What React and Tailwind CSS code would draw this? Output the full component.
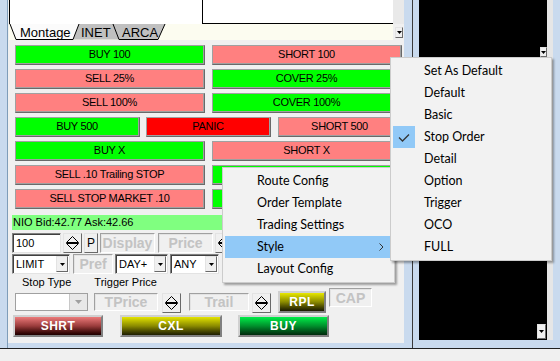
import React from 'react';

// raised classic button used in the hotkey grid
const Btn = ({ label, bg, className = '' }) => (
  <div className={`h-[20px] border border-[#a0a0a0] border-r-[#696969] border-b-[#696969] ${className}`}>
    <div className={`h-full flex items-center justify-center border-r border-b border-[#a0a0a0] ${bg}`}>
      {label && <span className="text-[11px] leading-none tracking-[-0.3px] text-black whitespace-nowrap">{label}</span>}
    </div>
  </div>
);

const Spin = ({ className = '' }) => (
  <div className={`w-[19px] h-[20px] bg-[#f0f0f0] border border-[#e3e3e3] border-r-[#696969] border-b-[#696969] flex items-center justify-center ${className}`}>
    <svg width="15" height="16" viewBox="0 0 15 16">
      <path d="M1.5 7.5 H13.5 L7.5 1.5 Z" fill="none" stroke="#000" />
      <path d="M1.5 8.5 H13.5 L7.5 14.5 Z" fill="none" stroke="#000" />
    </svg>
  </div>
);

const DropBtn = ({ className = '' }) => (
  <div className={`bg-[#f0f0f0] border border-[#e3e3e3] border-r-[#696969] border-b-[#696969] flex items-center justify-center ${className}`}>
    <svg width="5" height="3" viewBox="0 0 5 3">
      <path d="M0 0H5L2.5 3Z" fill="#000" />
    </svg>
  </div>
);

const Select = ({ label, className = '' }) => (
  <div className={`h-[20px] flex bg-white border border-[#808080] border-r-[#e3e3e3] border-b-[#e3e3e3] shadow-[inset_1px_1px_0_#404040] ${className}`}>
    <div className="flex-1 pl-[3px] flex items-center text-[11px] leading-none">{label}</div>
    <DropBtn className="w-[12px] h-[16px] mt-[1px] mr-[1px]" />
  </div>
);

const Off = ({ label, className = '' }) => (
  <div className={`h-[20px] flex items-center justify-center border border-[#a0a0a0] border-r-white border-b-white shadow-[inset_1px_1px_0_#e3e3e3] text-[14px] font-bold leading-none text-[#c3c3c3] ${className}`}>
    {label}
  </div>
);

const Grad = ({ label, bg, className = '' }) => (
  <div className={`border-2 border-[#d0d0d0] border-r-[#808080] border-b-[#808080] ${className}`}>
    <div className={`h-full flex items-center justify-center ${bg}`}>
      <span className="text-[12px] font-bold leading-none text-white tracking-[0.5px]">{label}</span>
    </div>
  </div>
);

const MenuItem = ({ label, active, arrow }) => (
  <div className={`h-[22px] flex items-center pl-[32px] pr-[8px] ${active ? 'bg-[#91c9f7]' : ''}`}>
    <span className="flex-1">{label}</span>
    {arrow && (
      <svg width="5" height="8" viewBox="0 0 5 8">
        <path d="M0.5 0.5 L4 4 L0.5 7.5" fill="none" stroke="#333" />
      </svg>
    )}
  </div>
);

const styles = ['Set As Default', 'Default', 'Basic', 'Stop Order', 'Detail', 'Option', 'Trigger', 'OCO', 'FULL'];

export default function App() {
  return (
    <div className="relative w-[560px] h-[361px] overflow-hidden bg-[#f0f0f0] font-['Liberation_Sans',Arial,sans-serif] text-black">
      <div className="flex h-[349px] border-b border-[#202020]">
        {/* order entry window */}
        <div className="flex w-[413px] border-r border-[#3a3a3a]">
          <div className="w-[8px] bg-[#c9daee] border-r border-[#7f9db9]" />
          <div className="flex-1 flex flex-col">
            <div className="flex-1 flex flex-col">
              <div className="flex h-[24px]">
                <div className="ml-[1px] w-[193px] bg-white border-l border-black" />
                <div className="w-[191px] bg-white border-l border-b border-black" />
                <div className="flex-1 bg-[#e9e9e9]" />
              </div>
              <div className="flex h-[16px]">
                <div className="ml-[1px] w-[384px] bg-[#fcfcf0]">
                  <svg width="384" height="16" className="block">
                    <polygon points="58,0 118,0 112,15.5 64,15.5" fill="#c0c0c0" />
                    <polygon points="104,0 156,0 149,15.5 110,15.5" fill="#c0c0c0" />
                    <polyline points="104,0 110,15.5 149,15.5 156,0" fill="none" stroke="#000" />
                    <polygon points="1,0 70,0 64,15.5 7,15.5" fill="#fbfbfb" />
                    <polyline points="1,0 7,15.5 64,15.5 70,0" fill="none" stroke="#000" />
                    <g fontFamily="Liberation Sans, Arial, sans-serif" fontSize="13" fill="#000">
                      <text x="11" y="13">Montage</text>
                      <text x="72" y="13">INET</text>
                      <text x="113" y="13">ARCA</text>
                    </g>
                  </svg>
                </div>
                <div className="flex-1 pt-[3px] pl-[2px]">
                  <DropBtn className="w-[8px] h-[11px]" />
                </div>
              </div>

              {/* hotkey buttons */}
              <div className="mt-[5px] ml-[7px] w-[387px] flex flex-col gap-[4px]">
                <div className="flex gap-[7px]">
                  <Btn label="BUY 100" bg="bg-[#00ff00]" className="w-[190px]" />
                  <Btn label="SHORT 100" bg="bg-[#ff8080]" className="w-[190px]" />
                </div>
                <div className="flex gap-[7px]">
                  <Btn label="SELL 25%" bg="bg-[#ff8080]" className="w-[190px]" />
                  <Btn label="COVER 25%" bg="bg-[#00ff00]" className="w-[190px]" />
                </div>
                <div className="flex gap-[7px]">
                  <Btn label="SELL 100%" bg="bg-[#ff8080]" className="w-[190px]" />
                  <Btn label="COVER 100%" bg="bg-[#00ff00]" className="w-[190px]" />
                </div>
                <div className="flex">
                  <Btn label="BUY 500" bg="bg-[#00ff00]" className="w-[125px]" />
                  <Btn label="PANIC" bg="bg-[#ff0000]" className="w-[125px] ml-[6px]" />
                  <Btn label="SHORT 500" bg="bg-[#ff8080]" className="flex-1 ml-[7px]" />
                </div>
                <div className="flex gap-[7px]">
                  <Btn label="BUY X" bg="bg-[#00ff00]" className="w-[190px]" />
                  <Btn label="SHORT X" bg="bg-[#ff8080]" className="w-[190px]" />
                </div>
                <div className="flex gap-[7px]">
                  <Btn label="SELL .10 Trailing STOP" bg="bg-[#ff8080]" className="w-[190px]" />
                  <Btn bg="bg-[#00ff00]" className="w-[190px]" />
                </div>
                <div className="flex gap-[7px]">
                  <Btn label="SELL STOP MARKET .10" bg="bg-[#ff8080]" className="w-[190px]" />
                  <Btn bg="bg-[#00ff00]" className="w-[190px]" />
                </div>
              </div>

              <div className="mt-[6px] ml-[4px] w-[388px] h-[15px] bg-[#80ff80] pl-[1px] flex items-center text-[11px] leading-none">
                NIO Bid:42.77 Ask:42.66
              </div>

              <div className="mt-[3px] ml-[4px] flex h-[20px]">
                <div className="w-[49px] h-[20px] bg-white border border-[#808080] border-r-[#e3e3e3] border-b-[#e3e3e3] shadow-[inset_1px_1px_0_#404040] pl-[3px] flex items-center text-[11px] leading-none">
                  100
                </div>
                <Spin className="ml-[2px]" />
                <div className="ml-[2px] w-[14px] h-[20px] border border-[#e3e3e3] border-r-[#696969] border-b-[#696969] flex items-center justify-center text-[12px] leading-none">
                  P
                </div>
                <Off label="Display" className="ml-[2px] w-[55px]" />
                <Off label="Price" className="ml-[3px] w-[55px]" />
                <Spin className="ml-[2px]" />
              </div>

              <div className="mt-[1px] ml-[4px] flex h-[20px]">
                <Select label="LIMIT" className="w-[58px]" />
                <Off label="Pref" className="ml-[3px] w-[40px]" />
                <Select label="DAY+" className="ml-[2px] w-[53px]" />
                <Select label="ANY" className="ml-[2px] w-[49px]" />
              </div>

              <div className="h-[14px] flex items-end text-[11px] leading-[12px]">
                <span className="ml-[14px]">Stop Type</span>
                <span className="ml-[23px]">Trigger Price</span>
              </div>

              <div className="h-[25px] flex items-start ml-[7px]">
                <div className="mt-[5px] w-[73px] h-[18px] flex bg-white border border-[#a0a0a0]">
                  <div className="flex-1" />
                  <div className="w-[18px] h-full bg-[#e8e8e8] border-l border-[#c8c8c8] flex items-center justify-center">
                    <svg width="7" height="4" viewBox="0 0 7 4">
                      <path d="M0 0H7L3.5 4Z" fill="#a0a0a0" />
                    </svg>
                  </div>
                </div>
                <Off label="TPrice" className="mt-[5px] ml-[6px] w-[64px] !h-[18px]" />
                <Spin className="mt-[5px] ml-[4px]" />
                <Off label="Trail" className="mt-[5px] ml-[8px] w-[60px] !h-[18px]" />
                <Spin className="mt-[5px] ml-[3px]" />
                <Grad label="RPL" bg="bg-linear-to-b from-[#e8e800] via-[#8a8a00] to-[#1a1a00]" className="mt-[3px] ml-[7px] w-[48px] h-[22px]" />
                <Off label="CAP" className="ml-[3px] w-[43px] !h-[19px]" />
              </div>

              <div className="mt-[2px] ml-[5px] flex h-[22px]">
                <Grad label="SHRT" bg="bg-linear-to-b from-[#ec7a7a] via-[#9a3c3c] to-[#1e0000]" className="w-[90px]" />
                <Grad label="CXL" bg="bg-linear-to-b from-[#e4e400] via-[#8a8a00] to-[#1e1e00]" className="ml-[17px] w-[102px]" />
                <Grad label="BUY" bg="bg-linear-to-b from-[#00ee48] via-[#00902c] to-[#002a0c]" className="ml-[16px] w-[91px]" />
              </div>
            </div>
            <div className="h-[5px] bg-[#c9daee]" />
          </div>
          <div className="w-[8px] bg-[#c9daee]" />
        </div>

        {/* level 2 window */}
        <div className="flex-1 flex flex-col">
          <div className="flex flex-1">
            <div className="w-[6px] bg-[#c9daee]" />
            <div className="w-[128px] bg-black relative">
              <DropBtn className="absolute right-0 top-[47px] w-[7px] h-[10px]" />
              <DropBtn className="absolute right-[1px] bottom-[1px] w-[9px] h-[15px]" />
            </div>
            <div className="w-[6px] bg-[#e6e6e6]" />
            <div className="flex-1 bg-[#c9daee]" />
          </div>
          <div className="h-[8px] bg-[#c9daee]" />
        </div>
      </div>

      {/* context menu */}
      <div className="absolute left-[222px] top-[167px] w-[173px] bg-[#f2f2f2] border border-[#cccccc] p-[2px] shadow-[2px_2px_2px_rgba(0,0,0,0.35)] font-['Lato',sans-serif] text-[12.5px] leading-none">
        <MenuItem label="Route Config" />
        <MenuItem label="Order Template" />
        <MenuItem label="Trading Settings" />
        <MenuItem label="Style" active arrow />
        <MenuItem label="Layout Config" />
      </div>

      <div className="absolute left-[390px] top-[57px] w-[162px] bg-[#f2f2f2] border border-[#cccccc] p-[2px] shadow-[2px_2px_2px_rgba(0,0,0,0.35)] font-['Lato',sans-serif] text-[12.5px] leading-none">
        {styles.map((s) => (
          <div key={s} className="h-[22px] flex items-center">
            <div className={`w-[22px] h-[22px] flex items-center justify-center ${s === 'Stop Order' ? 'bg-[#91c9f7]' : ''}`}>
              {s === 'Stop Order' && (
                <svg width="12" height="9" viewBox="0 0 12 9">
                  <path d="M1 4.5 L4.5 8 L11 1.5" fill="none" stroke="#333" strokeWidth="1.3" />
                </svg>
              )}
            </div>
            <span className="ml-[9px]">{s}</span>
          </div>
        ))}
      </div>
    </div>
  );
}
